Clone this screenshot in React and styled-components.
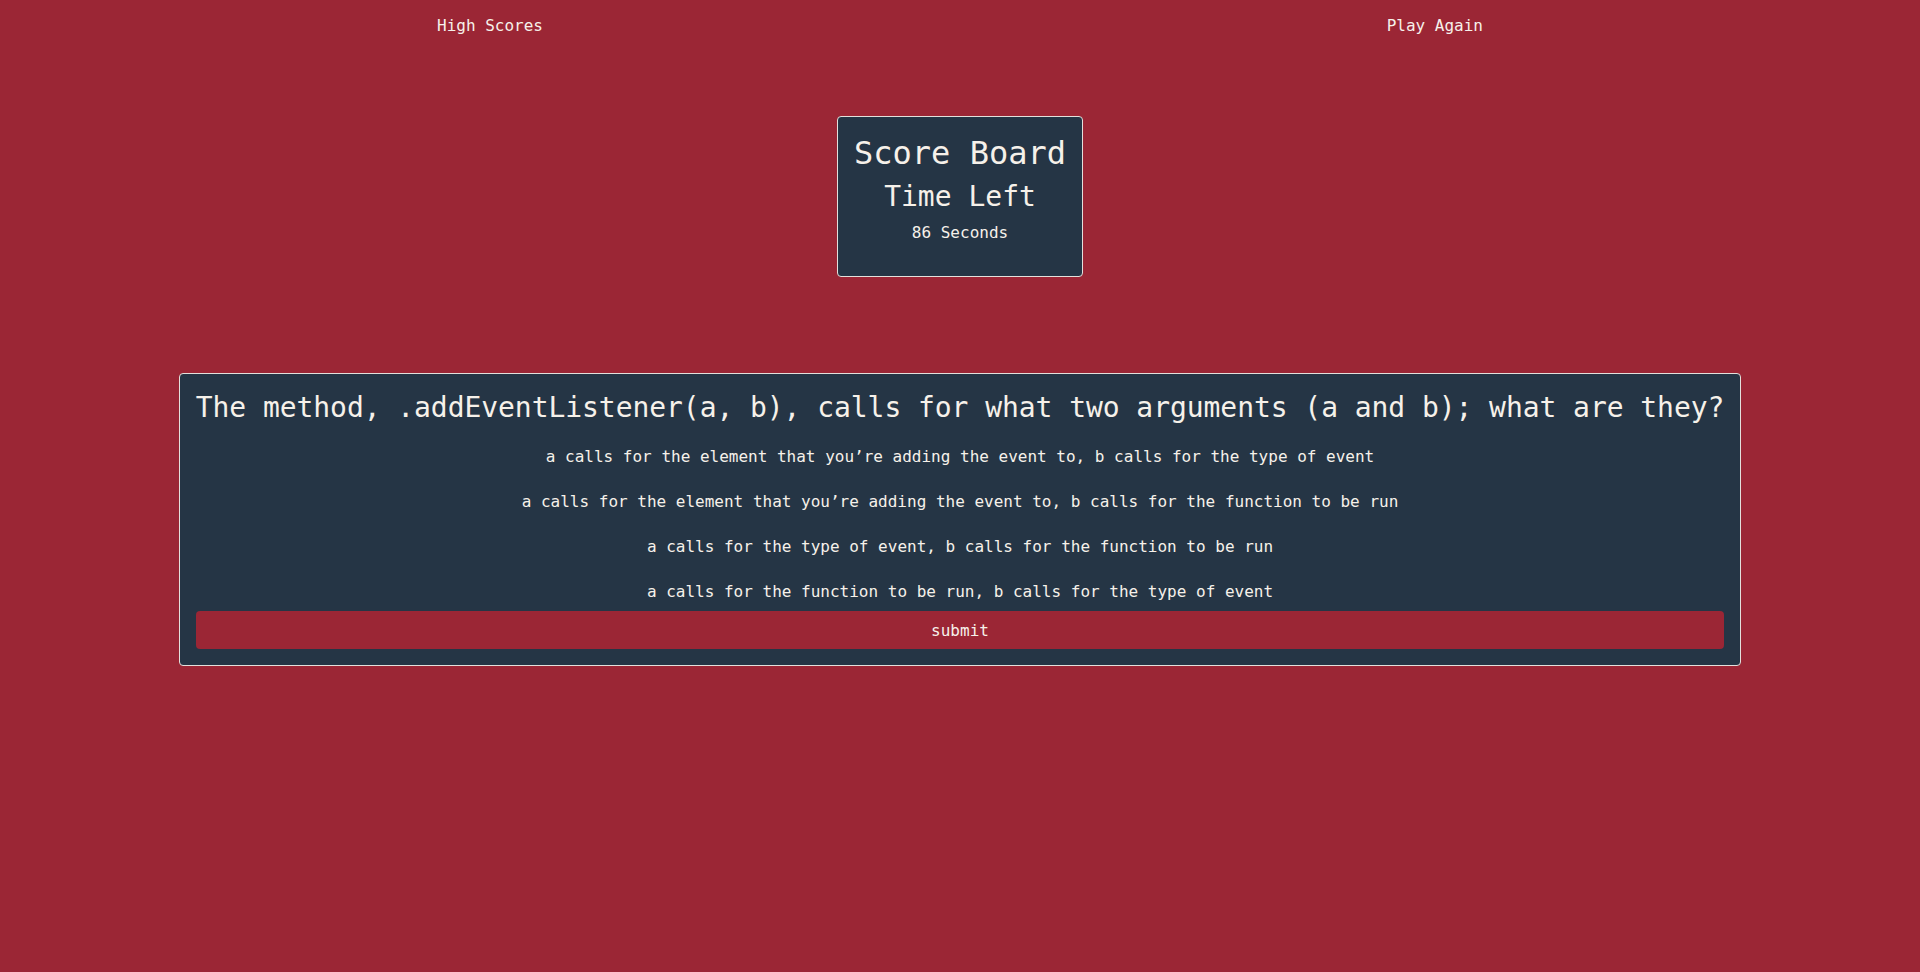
import styled, { createGlobalStyle } from "styled-components";

const GlobalStyle = createGlobalStyle`
  body {
    margin: 0;
    background-color: #9b2635;
    color: #f6f1ea;
    font-family: "DejaVu Sans Mono", "Liberation Mono", monospace;
  }
`;

const Page = styled.div`
  display: flex;
  flex-direction: column;
  align-items: center;
  min-height: 972px;
`;

const Nav = styled.nav`
  width: 1046px;
  height: 51px;
  display: flex;
  justify-content: space-between;
  align-items: center;
`;

const NavLink = styled.a`
  font-size: 16px;
  line-height: 24px;
  color: inherit;
  text-decoration: none;
  cursor: pointer;
`;

const Board = styled.section`
  margin-top: 65px;
  padding: 16px 16px 31px;
  background-color: #253545;
  border: 1px solid #e4e0dc;
  border-radius: 4px;
  text-align: center;
`;

const BoardTitle = styled.h1`
  margin: 0;
  font-size: 32px;
  line-height: 40px;
  font-weight: 500;
`;

const TimeTitle = styled.h2`
  margin: 6px 0 0;
  font-size: 28px;
  line-height: 36px;
  font-weight: 500;
`;

const TimeLeft = styled.p`
  margin: 6px 0 0;
  font-size: 16px;
  line-height: 24px;
`;

const Quiz = styled.section`
  margin-top: 96px;
  padding: 16px;
  display: flex;
  flex-direction: column;
  background-color: #253545;
  border: 1px solid #e4e0dc;
  border-radius: 4px;
`;

const Question = styled.h2`
  margin: 0;
  font-size: 28px;
  line-height: 36px;
  font-weight: 500;
  letter-spacing: -0.06px;
  white-space: nowrap;
`;

const Options = styled.ul`
  list-style: none;
  margin: 19px 0 0;
  padding: 0;
  display: flex;
  flex-direction: column;
  gap: 21px;
`;

const Option = styled.li`
  font-size: 16px;
  line-height: 24px;
  text-align: center;
  cursor: pointer;
`;

const Submit = styled.button`
  margin-top: 7px;
  height: 38px;
  border: none;
  border-radius: 4px;
  background-color: #9b2635;
  color: inherit;
  font-family: inherit;
  font-size: 16px;
  cursor: pointer;
`;

const answers = [
  "a calls for the element that you\u2019re adding the event to, b calls for the type of event",
  "a calls for the element that you\u2019re adding the event to, b calls for the function to be run",
  "a calls for the type of event, b calls for the function to be run",
  "a calls for the function to be run, b calls for the type of event",
];

export default function App() {
  return (
    <>
      <GlobalStyle />
      <Page>
        <Nav>
          <NavLink>High Scores</NavLink>
          <NavLink>Play Again</NavLink>
        </Nav>
        <Board>
          <BoardTitle>Score Board</BoardTitle>
          <TimeTitle>Time Left</TimeTitle>
          <TimeLeft>86 Seconds</TimeLeft>
        </Board>
        <Quiz>
          <Question>
            The method, .addEventListener(a, b), calls for what two arguments (a
            and b); what are they?
          </Question>
          <Options>
            {answers.map((a) => (
              <Option key={a}>{a}</Option>
            ))}
          </Options>
          <Submit>submit</Submit>
        </Quiz>
      </Page>
    </>
  );
}
